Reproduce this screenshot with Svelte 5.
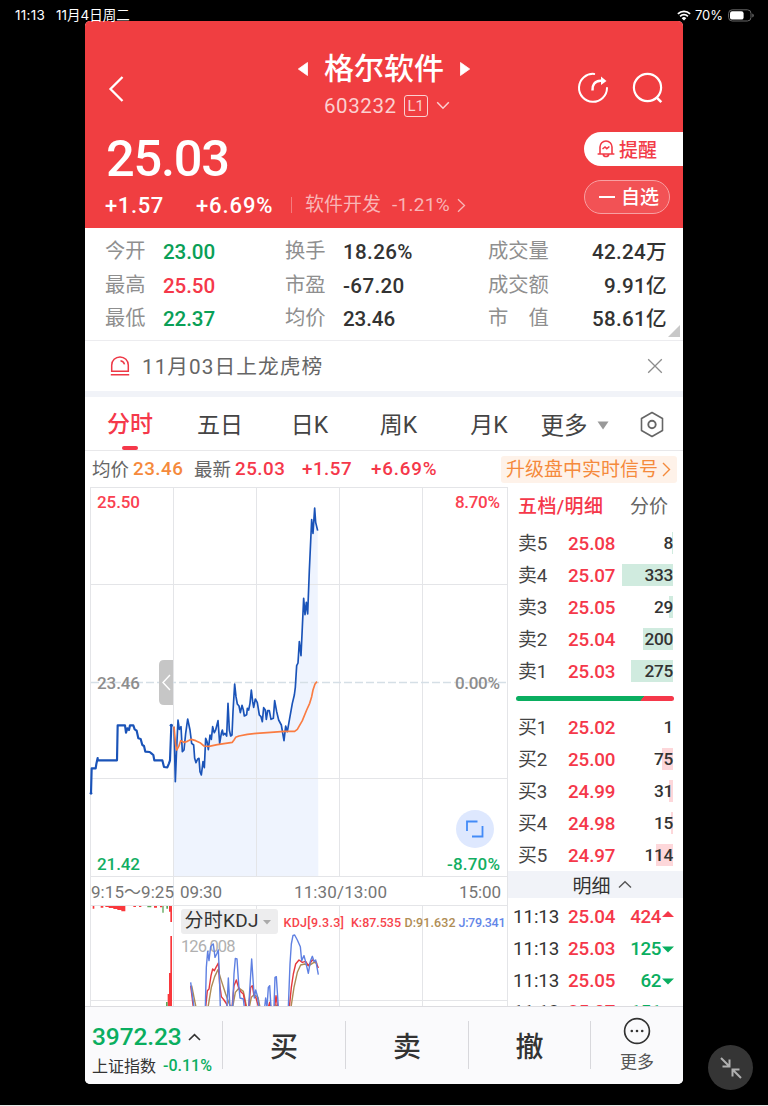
<script>
  const stats = [
    ['今开', '23.00', 'green', '换手', '18.26%', '成交量', '42.24万'],
    ['最高', '25.50', 'red', '市盈', '-67.20', '成交额', '9.91亿'],
    ['最低', '22.37', 'green', '均价', '23.46', '市　值', '58.61亿']
  ];
  const sells = [
    ['卖5', '25.08', '8', 1],
    ['卖4', '25.07', '333', 51],
    ['卖3', '25.05', '29', 4],
    ['卖2', '25.04', '200', 30],
    ['卖1', '25.03', '275', 42]
  ];
  const buys = [
    ['买1', '25.02', '1', 0],
    ['买2', '25.00', '75', 11],
    ['买3', '24.99', '31', 4],
    ['买4', '24.98', '15', 2],
    ['买5', '24.97', '114', 17]
  ];
  const trades = [
    ['11:13', '25.04', '424', 'up'],
    ['11:13', '25.03', '125', 'down'],
    ['11:13', '25.05', '62', 'down'],
    ['11:13', '25.07', '151', 'down']
  ];

  const auction =
    '21,340 23,265 35,265 37,252 41,234 41,241 99,241 101,136 123,136 126,158 130,145 135,150 138,136 148,136 152,148 158,152 163,175 170,177 175,195 180,198 184,215 197,216 203,221 208,225 211,241 235,241 240,261 250,262 255,250 258,241 262,136';
  const price =
    '270,140 274,305 278,205 282,120 286,148 291,140 295,215 300,210 305,160 311,117 318,150 323,190 329,195 332,235 336,248 341,237 345,235 348,275 352,285 357,245 361,263 365,175 369,185 373,209 378,165 382,178 386,140 391,158 395,150 402,122 407,190 412,160 415,150 418,165 423,160 428,168 432,70 436,150 440,168 444,165 447,95 452,12 456,50 460,72 465,78 469,98 474,76 478,90 481,108 488,104 490,85 494,90 498,70 502,30 506,65 509,82 514,57 520,68 526,105 531,110 535,125 539,83 544,90 547,118 551,92 556,92 561,118 568,115 572,62 578,95 584,120 592,135 600,182 605,138 610,155 617,115 625,70 631,45 634,22 638,-43 642,-51 646,-115 651,-73 655,-158 659,-245 663,-196 667,-233 671,-198 676,-328 683,-481 687,-440 692,-516 695,-473 701,-448';
  const average =
    '270,140 275,195 278,210 284,200 290,182 300,187 310,184 322,178 335,182 348,188 360,198 375,199 400,194 445,187 450,180 455,172 465,168 490,163 517,160 560,157 600,154 632,154 640,148 655,122 668,90 677,70 683,50 687,30 693,12 699,5';

  const jLine = [
    '320,325 326,370 330,400',
    '364,400 367,280 371,232 375,260 380,218 385,212 388,210 393,250 398,240 403,228 406,300 409,400',
    '429,400 433,312 438,400 446,395 450,300 454,253 459,255 464,330 468,372 478,375 481,400',
    '494,400 497,350 503,255 508,330 511,372 515,348 520,365 525,400',
    '542,400 545,372 549,400 553,340 557,335 561,400',
    '570,400 573,310 577,308 583,400',
    '613,400 618,270 622,210 627,184 632,183 640,198 649,218 653,260 660,245 666,268 673,298 679,262 685,247 690,262 695,258 703,302'
  ];
  const kLine = [
    '320,335 328,400',
    '365,400 370,350 375,345 381,305 386,285 391,290 396,280 403,267 407,330 412,368 420,378 428,390 430,400',
    '444,400 450,335 457,318 465,345 472,355 478,360 486,400',
    '494,400 500,340 505,335 510,365 516,372 524,400',
    '553,400 557,385 561,400',
    '572,400 576,365 581,400',
    '616,400 622,340 628,300 635,270 645,258 655,265 665,262 673,275 685,258 695,262 703,282'
  ];
  const dLine = [
    '323,335 336,400',
    '372,400 382,340 392,308 402,287 412,320 425,360 436,390 442,400',
    '446,400 454,355 465,342 478,352 488,400',
    '496,400 502,370 510,362 522,370 528,400',
    '574,392 584,400',
    '621,400 630,340 640,295 650,273 662,270 675,275 690,265 700,268'
  ];
</script>

<div class="screen">
  <div class="status">
    <span class="time">11:13</span>
    <span class="date">11月4日周二</span>
    <span class="grow"></span>
    <svg width="14" height="11" viewBox="0 0 14 11">
      <path d="M.9 3.9a8.8 8.8 0 0 1 12.2 0M3.1 6.3a5.6 5.6 0 0 1 7.8 0" fill="none" stroke="#fff" stroke-width="1.8" />
      <path d="M7 10.6 4.7 8.2a3.2 3.2 0 0 1 4.6 0z" fill="#fff" />
    </svg>
    <span class="pct">70%</span>
    <svg width="26" height="13" viewBox="0 0 26 13">
      <rect x=".6" y=".8" width="22.4" height="11.2" rx="3.6" fill="none" stroke="#666" />
      <rect x="2" y="2.2" width="13.6" height="8.4" rx="2.2" fill="#fff" />
      <path d="M24.4 4.4v4q1.3-.6 1.3-2t-1.3-2z" fill="#777" />
    </svg>
  </div>

  <main class="app">
    <header>
      <div class="nav">
        <svg class="back" width="16" height="28" viewBox="0 0 16 28"><path d="M14.5 2 2.5 14l12 12" fill="none" stroke="#fff" stroke-width="2.3" /></svg>
        <div class="title">
          <div class="name">
            <svg width="10" height="14" viewBox="0 0 10 14"><path d="M9.5.5v13L.3 7z" fill="#fff" stroke="#fff" stroke-width=".8" stroke-linejoin="round" /></svg>
            <h1>格尔软件</h1>
            <svg width="10" height="14" viewBox="0 0 10 14"><path d="M.5.5v13L9.7 7z" fill="#fff" stroke="#fff" stroke-width=".8" stroke-linejoin="round" /></svg>
          </div>
          <div class="code">
            <span>603232</span><i>L1</i>
            <svg width="14" height="9" viewBox="0 0 14 9"><path d="m1.2 1.2 5.8 6 5.8-6" fill="none" stroke="#fbd0d0" stroke-width="1.5" /></svg>
          </div>
        </div>
        <div class="tools">
          <svg width="32" height="32" viewBox="0 0 32 32" fill="none" stroke="#fff" stroke-width="2">
            <path d="M17.2 1.9A14 14 0 1 0 30 16" stroke-linecap="round" />
            <path d="M15.500 18.500c-.5-5.500 2-9.500 8-9.700h3" stroke-width="2.500" />
            <path d="m24 4.500 5.500 4.400-5.500 4.100z" fill="#fff" stroke="none" />
          </svg>
          <svg width="32" height="32" viewBox="0 0 32 32" fill="none" stroke="#fff" stroke-width="2.2"><circle cx="15.500" cy="15.500" r="13.600" /><path d="m24.300 25.200 5 5" stroke-width="2.600" /></svg>
        </div>
      </div>
      <div class="quote">
        <div class="figures">
          <div class="last">25.03</div>
          <div class="change">
            <b class="delta">+1.57</b><b class="rate">+6.69%</b><i></i>
            <span class="sector">软件开发</span><span class="srate">-1.21%</span>
            <svg width="9" height="15" viewBox="0 0 9 15"><path d="m1 1.300 6.500 6.200L1 13.700" fill="none" stroke="#f9b5b6" stroke-width="1.300" /></svg>
          </div>
        </div>
        <div class="actions">
          <div class="alert">
            <svg width="18" height="19" viewBox="0 0 18 19" fill="none" stroke="#f23c48" stroke-width="1.600">
              <path d="M3 14.500V8a6 6 0 0 1 12 0v6.500M.6 15h16.800M6.300 15.500c.5 2.600 4.900 2.600 5.400 0" /><path d="m5.500 10 2.500-2 1.800 1.600L12.400 7.500" />
            </svg><span>提醒</span>
          </div>
          <div class="fav"><u></u><span>自选</span></div>
        </div>
      </div>
    </header>

    <section class="stats">
      {#each stats as s}
        <div class="srow">
          <span>{s[0]}</span><b class={s[2]}>{s[1]}</b>
          <span>{s[3]}</span><b class:wide={s[4].length > 5}>{s[4]}</b>
          <span>{s[5]}</span><b class="end">{s[6]}</b>
        </div>
      {/each}
      <svg class="corner" width="12" height="12"><path d="M12 0v12H0z" fill="#c8c8c8" /></svg>
    </section>

    <section class="notice">
      <svg width="20" height="20" viewBox="0 0 20 20" fill="none" stroke="#ee3846" stroke-width="1.500"><path d="M1.700 15.300V9.200a8.300 8.300 0 0 1 16.600 0v6.100zM.8 18.800h18.400M10.500 4.800c2 .3 3.400 1.500 4 3.600" /></svg>
      <span>11月03日上龙虎榜</span>
      <svg width="16" height="16" viewBox="0 0 16 16"><path d="m1.200 1.200 13.600 13.600M14.800 1.200 1.200 14.800" stroke="#8c8c8c" stroke-width="1.300" /></svg>
    </section>

    <nav class="tabs">
      <span class="on">分时<i></i></span><span>五日</span><span>日K</span><span>周K</span><span>月K</span>
      <span class="more">更多<svg width="12" height="9"><path d="M.5.500h11L6 8.500z" fill="#999" /></svg></span>
      <span class="gear"><svg width="26" height="27" viewBox="0 0 26 27" fill="none" stroke="#666" stroke-width="1.600"><path d="m13 1.500 10.500 6v12L13 25.500l-10.500-6v-12z" stroke-linejoin="round" /><circle cx="13" cy="13.500" r="3.700" stroke-width="1.900" /></svg></span>
    </nav>

    <div class="info">
      <span class="lab">均价</span><b class="avg">23.46</b>
      <span class="lab">最新</span><b class="red new">25.03</b><b class="red d">+1.57</b><b class="red pc">+6.69%</b>
      <div class="promo">升级盘中实时信号<svg width="9" height="15" viewBox="0 0 9 15"><path d="m1 1 6.500 6.500L1 14" fill="none" stroke="#f58a3c" stroke-width="1.400" /></svg></div>
    </div>

    <div class="board">
      <svg class="chart" width="423" height="519" viewBox="85 487 423 519">
        <polygon points="{price} 703,588 268,588" transform="translate(84 680) scale(.33333)" fill="#eff4fe" />
        <g stroke="#e4e5e8" stroke-width="1">
          <path d="M90 487.500h418M90 584.500h418M90 778.500h418M90 876.500h418M90 905.500h418M90 1000.500h418M90.500 487v519M173.500 487v519M256.500 487v390M256.500 906v100M339.500 487v390M339.500 906v100M422.500 487v390M422.500 906v100M507.500 487v519" />
        </g>
        <path d="M91 682.500h416" stroke="#d5dfe6" stroke-width="1.300" stroke-dasharray="8 3" />
        <path d="M173 660v45h-9q-5 0-5-5v-35q0-5 5-5z" fill="#c6c6c6" />
        <path d="m170 675-7 7.500 7 7.500" fill="none" stroke="#fff" stroke-width="1.400" />
        <g transform="translate(84 680) scale(.33333)" fill="none" stroke-width="5" stroke-linejoin="round">
          <polyline points={auction} stroke="#1a53b8" stroke-width="6.500" />
          <circle cx="262" cy="136" r="5" fill="#1a53b8" /><circle cx="21" cy="340" r="4" fill="#1a53b8" />
          <polyline points={price} stroke="#1a53b8" />
          <polyline points={average} stroke="#fa7c42" />
        </g>
        <g class="big">
          <text x="97" y="508" textLength="43" fill="#fa4050">25.50</text>
          <text x="97" y="689" textLength="43" fill="#8d8d8d">23.46</text>
          <text x="97" y="869.500" textLength="43" fill="#12ae62">21.42</text>
          <text x="455" y="508" textLength="45" fill="#fa4050">8.70%</text>
          <text x="455" y="689" textLength="45" fill="#8d8d8d">0.00%</text>
          <text x="447" y="869.500" textLength="53" fill="#12ae62">-8.70%</text>
        </g>
        <g class="axis">
          <text x="91" y="898" textLength="83">9:15～9:25</text>
          <text x="180" y="898" textLength="42">09:30</text>
          <text x="294" y="898" textLength="93">11:30/13:00</text>
          <text x="459" y="898" textLength="42">15:00</text>
        </g>
        <circle cx="475" cy="829" r="19" fill="#dee8fe" />
        <path d="M477.500 821.500H467v9.500M472 836.500h10.500V826" fill="none" stroke="#438bf7" stroke-width="1.800" />

        <g transform="translate(84 874) scale(.33333)">
          <path d="M26 96h5v8h-5zM50 96h8v5h-8zM64 96h60v16h-12v-4h-12v-3H88v-3H74v-3H64zM148 96h8v3h-8zM165 96h7v3h-7zM210 96h9v5h-9zM228 96h7v4h-7zM255 96h9v17h-9zM259 96h5v48h-5zM259 186h5v214h-5zM255 297h9v103h-9zM251 360h9v40h-9z" fill="#f9383c" />
          <path d="M190 96h12v4h-12zM235 96h4v20h-4zM247 96h5v8h-5zM246 384h5v16h-5z" fill="#5da75a" />
        </g>
        <rect x="181" y="909" width="97" height="25" rx="3" fill="#ededee" />
        <text class="ind" x="184.500" y="927" textLength="74">分时KDJ</text>
        <path d="M263 920h8l-4 4.500z" fill="#aaa" />
        <g class="tiny">
          <text x="283.500" y="927" textLength="60.500" fill="#f7434b">KDJ[9.3.3]</text>
          <text x="351" y="927" textLength="50" fill="#f7434b">K:87.535</text>
          <text x="404.500" y="927" textLength="51" fill="#b08d55">D:91.632</text>
          <text x="458.500" y="927" textLength="47" fill="#6386e8">J:79.341</text>
        </g>
        <text class="max" x="181" y="951.500" textLength="54.500">126.008</text>
        <g transform="translate(84 874) scale(.33333)" fill="none" stroke-width="4.200" stroke-linejoin="round">
          {#each dLine as p}<polyline points={p} stroke="#ad8b55" />{/each}
          {#each kLine as p}<polyline points={p} stroke="#e5373c" />{/each}
          {#each jLine as p}<polyline points={p} stroke="#5f80e2" />{/each}
        </g>
      </svg>

      <aside>
        <div class="head"><b>五档/明细</b><span>分价</span></div>
        {#each sells as r}
          <div class="level"><span>{r[0]}</span><b>{r[1]}</b><div class="qty"><i style="width:{r[3]}px"></i><em>{r[2]}</em></div></div>
        {/each}
        <div class="ratio"><i></i></div>
        {#each buys as r}
          <div class="level buy"><span>{r[0]}</span><b>{r[1]}</b><div class="qty"><i style="width:{r[3]}px"></i><em>{r[2]}</em></div></div>
        {/each}
        <div class="detail">明细<svg width="14" height="9" viewBox="0 0 14 9"><path d="m1 7.500 6-5.700 6 5.700" fill="none" stroke="#555" stroke-width="1.400" /></svg></div>
        <div class="trades">
          {#each trades as t}
            <div class="trade">
              <span>{t[0]}</span><b>{t[1]}</b><em class={t[3]}>{t[2]}</em>
              <svg width="12" height="12">{#if t[3] === 'up'}<path d="M0 6h12L6 0z" fill="#f5384a" />{:else}<path d="M0 3.500h12l-6 6z" fill="#0aae60" />{/if}</svg>
            </div>
          {/each}
        </div>
      </aside>
    </div>

    <footer>
      <div class="index">
        <div class="pts">3972.23<svg width="13" height="8" viewBox="0 0 13 8"><path d="m1 7 5.500-5.300L12 7" fill="none" stroke="#333" stroke-width="1.600" /></svg></div>
        <div class="sh">上证指数<b>-0.11%</b></div>
      </div>
      <div class="act">买</div>
      <div class="act">卖</div>
      <div class="act">撤</div>
      <div class="act etc">
        <svg width="28" height="28" viewBox="0 0 28 28"><circle cx="14" cy="14" r="12.400" fill="none" stroke="#333" stroke-width="1.700" /><g fill="#333"><circle cx="8.800" cy="14" r="1.300" /><circle cx="14" cy="14" r="1.300" /><circle cx="19.200" cy="14" r="1.300" /></g></svg>
        更多
      </div>
    </footer>
  </main>

  <div class="float">
    <svg width="22" height="22" viewBox="0 0 22 22" fill="none" stroke="#b0b0b0" stroke-width="2"><path d="m1 1 8 8M9.500 2.500v7h-7M21 21l-8-8M12.500 19.500v-7h7" /></svg>
  </div>
</div>

<style>
  :global(body) { margin: 0; background: #e8e8e8; }
  .screen { position: relative; width: 768px; height: 1105px; background: #000; font-family: Roboto, "Noto Sans CJK SC", sans-serif; color: #333; overflow: hidden; }
  .screen * { box-sizing: border-box; }
  b, i, em, u { font-style: normal; text-decoration: none; }
  b { font-weight: 500; }
  svg { display: block; flex: none; }
  .red { color: #f5384a; }
  .green { color: #0a9f57; }

  .status { display: flex; align-items: center; height: 21px; padding: 9px 14px 0 15px; line-height: 12px; font-family: Inter, "Noto Sans CJK SC", sans-serif; font-size: 13.500px; color: #fff; white-space: nowrap; }
  .time { width: 41px; letter-spacing: .3px; }
  .grow { flex: 1; }
  .pct { margin: 0 5px 0 4px; font-size: 13px; }

  .app { width: 598px; height: 1063px; margin-left: 85px; background: #fff; border-radius: 5px; overflow: hidden; }
  header { height: 207px; background: #f03e41; color: #fff; }
  .nav { display: grid; grid-template-columns: 120px 1fr 120px; height: 104px; }
  .back { margin: 54px 0 0 23px; }
  .title { padding-top: 28px; }
  .name { display: flex; align-items: center; justify-content: center; gap: 16px; height: 40px; }
  h1 { margin: 0; font-size: 30px; line-height: 40px; height: 40px; font-weight: 500; }
  .code { display: flex; align-items: center; height: 33px; padding-left: 119px; font-size: 20.500px; letter-spacing: .6px; color: #fbd0d0; }
  .code i { width: 24px; height: 22px; margin: 0 8px 0 7px; border: 1px solid #fbd0d0; border-radius: 3px; font-size: 15px; line-height: 21px; letter-spacing: 0; text-align: center; }
  .tools { display: flex; gap: 23px; padding: 51px 0 0 14px; }
  .quote { display: flex; justify-content: space-between; height: 103px; }
  .last { height: 61px; padding: 7px 0 0 21px; font-size: 50.500px; line-height: 54px; font-weight: 500; letter-spacing: -1.200px; }
  .change { display: flex; align-items: center; height: 38px; padding-left: 20px; font-size: 22px; }
  .delta { width: 91px; letter-spacing: .6px; }
  .rate { width: 95px; letter-spacing: .9px; }
  .change i { width: 1px; height: 16px; margin-right: 13px; background: #f57b7d; }
  .sector { width: 87px; height: 38px; line-height: 38px; font-size: 19px; color: #f9b5b6; }
  .srate { width: 65px; font-size: 19px; line-height: 37px; height: 38px; letter-spacing: .3px; color: #f9b5b6; }
  .actions { width: 99px; padding-top: 7px; font-size: 19px; font-weight: 500; }
  .alert { display: flex; align-items: center; gap: 4px; height: 34px; padding-left: 13px; border-radius: 17px 0 0 17px; background: #fff; color: #f23c48; line-height: 37px; }
  .alert span { height: 34px; }
  .alert svg { margin-bottom: 2px; }
  .fav { display: flex; align-items: center; gap: 6px; width: 86px; height: 34px; margin-top: 14px; padding-left: 14px; border: 1px solid #f8a0a2; border-radius: 17px; background: #f25255; line-height: 34px; }
  .fav span { height: 32px; }
  .fav u { width: 16px; height: 2px; background: #fff; }

  .stats { position: relative; height: 113px; padding-top: 6px; border-bottom: 1px solid #ececef; }
  .srow { display: grid; grid-template-columns: 58px 122px 58px 145px 1fr 90px; padding: 0 17px 0 20px; height: 33.500px; line-height: 34px; font-size: 20px; white-space: nowrap; }
  .srow span { color: #8f8f8f; font-size: 20.300px; }
  .srow b { margin-top: 1px; font-size: 20.600px; letter-spacing: -.1px; }
  .srow .wide { letter-spacing: .35px; }
  .srow .end { margin-right: -1px; text-align: right; letter-spacing: .3px; }
  .corner { position: absolute; right: 3px; bottom: 3px; }

  .notice { display: flex; align-items: center; height: 56px; padding: 0 20px 0 25px; border-bottom: 6px solid #f1f3f8; color: #666; }
  .notice span { flex: 1; padding: 0 0 2px 12px; font-size: 20.700px; letter-spacing: 1.050px; }

  .tabs { display: grid; grid-template-columns: 90px 90px 89px 89px 92px 80px 68px; height: 54px; border-bottom: 1px solid #e8e8ea; font-size: 23px; line-height: 54px; color: #444; }
  .tabs > span { display: flex; align-items: center; justify-content: center; height: 57px; }
  .tabs .on { display: grid; justify-items: center; grid-template-rows: 49px 4px; align-content: start; align-items: start; line-height: 56px; color: #f5384a; font-weight: 500; }
  .on i { width: 16px; height: 4px; border-radius: 2px; background: #f5384a; }
  .tabs .more { gap: 9px; padding-right: 1px; font-size: 23.500px; }
  .tabs .gear { height: 54px; padding-left: 5px; }

  .info { display: flex; align-items: center; height: 36px; padding: 0 6px 0 7px; font-size: 18.800px; line-height: 34px; white-space: nowrap; }
  .info b { letter-spacing: .5px; }
  .info .pc { letter-spacing: .8px; }
  .lab { width: 41px; padding-top: 1px; color: #666; font-size: 18.500px; }
  .avg { width: 61px; color: #f58a3c; }
  .info .new { width: 67px; }
  .info .d { width: 69px; }
  .promo { display: flex; align-items: center; gap: 4px; height: 27px; line-height: 27px; margin-left: auto; padding: 0 6px 0 5px; border-radius: 3px; background: #fef2e9; color: #f58a3c; font-size: 19px; }

  .board { display: flex; height: 519px; }
  .chart { font-family: Roboto, "Noto Sans CJK SC", sans-serif; }
  .big { font-size: 17px; font-weight: 500; }
  .axis { font-size: 17px; fill: #757575; }
  .ind { font-size: 19px; fill: #333; }
  .tiny { font-size: 12.500px; font-weight: 500; }
  .max { font-size: 16.500px; fill: #b0b0b0; }

  aside { width: 175px; height: 519px; overflow: hidden; }
  .head { display: flex; height: 41px; padding-left: 10px; line-height: 40px; font-size: 19px; }
  .head b { width: 112px; letter-spacing: .4px; color: #f5384a; }
  .head span { color: #666; }
  .level { display: grid; grid-template-columns: 50px 54px 51px; grid-template-rows: 30px; height: 32px; padding-left: 10px; font-size: 18.800px; line-height: 33px; color: #444; }
  .level b { color: #f5384a; letter-spacing: -.1px; }
  .qty { display: grid; align-self: center; height: 22px; line-height: 22px; }
  .qty i, .qty em { grid-area: 1 / 1; justify-self: end; }
  .qty i { height: 22px; background: #d0ebdf; }
  .buy .qty i { background: #fdd7da; }
  .qty em { z-index: 1; font-size: 17.300px; font-weight: 500; letter-spacing: -.3px; color: #333; }
  .ratio { height: 24px; padding: 8px 9px 0 8px; }
  .ratio i { display: block; height: 5px; border-radius: 2.500px; background: linear-gradient(130deg, #0aae60 79%, #f5384a 79.300%); }
  .detail { display: flex; align-items: center; justify-content: center; gap: 7px; height: 27px; margin-top: -1px; padding-left: 13px; background: #f1f3f8; font-size: 19px; color: #333; }
  .trades { padding-top: 2px; }
  .trade { display: grid; grid-template-columns: 55px 55px 38px 12px; height: 32px; padding-left: 5px; font-size: 18.800px; line-height: 34px; }
  .trade:last-child { margin-top: -1.500px; }
  .trade span { letter-spacing: -.1px; }
  .trade b { color: #f5384a; letter-spacing: -.1px; }
  .trade em { text-align: right; font-weight: 500; letter-spacing: -.4px; }
  .trade svg { align-self: center; margin-left: 1px; }
  .up { color: #f5384a; }
  .down { color: #0aae60; }

  footer { display: grid; grid-template-columns: 137px 123px 123px 122px 93px; height: 78px; border-top: 1px solid #dcdce0; background: #fafafc; }
  .index { padding: 14px 0 0 7px; }
  .pts { display: flex; align-items: center; gap: 6px; height: 31px; font-size: 24.500px; font-weight: 500; color: #0aae60; letter-spacing: -.1px; }
  .sh { display: flex; align-items: center; height: 26px; font-size: 16px; }
  .sh b { margin-left: 7px; color: #0aae60; }
  .act { display: flex; align-items: center; justify-content: center; height: 48px; margin-top: 14px; border-left: 1px solid #d8d8dc; font-size: 28px; font-weight: 500; }
  .etc { flex-direction: column; gap: 4px; padding-top: 3px; font-size: 17px; font-weight: 400; line-height: 27px; color: #555; }
  .float { position: absolute; left: 708px; top: 1045px; display: grid; place-items: center; width: 45px; height: 45px; border-radius: 50%; background: #353535; }
</style>
